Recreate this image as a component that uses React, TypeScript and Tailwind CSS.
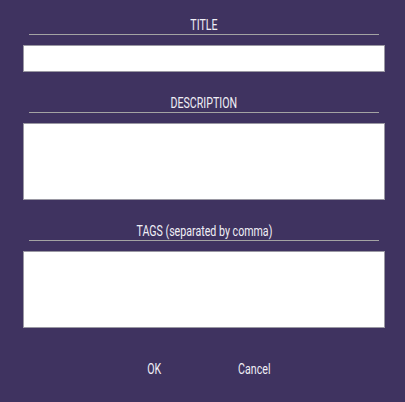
export default function App() {
  const label =
    "mx-[6px] border-b border-[#a3a3a3] text-center text-[14px] leading-[17px] text-[#f0eff6]";
  const font = { fontFamily: "Roboto, 'Liberation Sans', sans-serif" };
  const txt = "inline-block scale-x-[0.76] origin-center";
  return (
    <div
      className="w-[405px] h-[402px] bg-[#3f3360] pl-[23px] pr-[20px] pt-[17px] flex flex-col"
      style={font}
    >
      <div className={label}>
        <span className={txt}>TITLE</span>
      </div>
      <div className="mt-[10px] h-[27px] bg-white border border-[#9a98a3]" />

      <div className={label + " mt-[23px]"}>
        <span className={txt}>DESCRIPTION</span>
      </div>
      <div className="mt-[10px] h-[77px] bg-white border border-[#9a98a3]" />

      <div className={label + " mt-[23px]"}>
        <span className={txt}>TAGS (separated by comma)</span>
      </div>
      <div className="mt-[10px] h-[77px] bg-white border border-[#9a98a3]" />

      <div className="mt-[33px] flex justify-center text-[14px] leading-[17px] text-[#f0eff6]">
        <div className="w-[100px] text-center">
          <span className={txt}>OK</span>
        </div>
        <div className="w-[100px] text-center">
          <span className={txt}>Cancel</span>
        </div>
      </div>
    </div>
  );
}
